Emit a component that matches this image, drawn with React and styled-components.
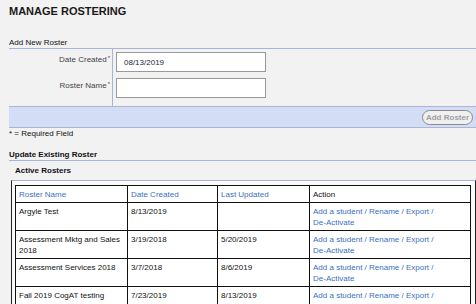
import React from "react";
import styled, { createGlobalStyle } from "styled-components";

const GlobalStyle = createGlobalStyle`
  body {
    margin: 0;
    background: #f2f2f2;
    font-family: "Liberation Sans", Arial, sans-serif;
    font-size: 8px;
    color: #111;
  }
`;

const Page = styled.div`
  padding: 5px 0 0 9px;
`;

const Title = styled.h1`
  margin: 0;
  font-size: 11px;
  line-height: 13px;
  font-weight: bold;
  color: #1a1a1a;
`;

const SectionHead = styled.div`
  margin-top: ${(p) => p.$top}px;
  line-height: 10px;
  font-weight: ${(p) => (p.$bold ? "bold" : "normal")};
  border-bottom: 1px solid #a9b5d3;
`;

const Form = styled.div`
  display: flex;
`;

const Labels = styled.div`
  width: 101px;
  border-right: 1px solid #a9b5d3;
  padding: 3px 2px 8px 0;
  display: flex;
  flex-direction: column;
  gap: 6px;
  align-items: flex-end;
`;

const Label = styled.div`
  box-sizing: border-box;
  height: 20px;
  padding-top: 1px;
  line-height: 10px;
  color: #444;
  sup {
    font-size: 6px;
    vertical-align: 2px;
    margin-left: 1px;
  }
`;

const Fields = styled.div`
  padding: 3px 0 8px 3px;
  display: flex;
  flex-direction: column;
  gap: 6px;
`;

const Input = styled.input`
  box-sizing: border-box;
  width: 150px;
  height: 20px;
  border: 1px solid #999;
  background: #fff;
  padding: 0 7px;
  font-family: inherit;
  font-size: 8px;
  color: #1c1c3c;
  outline: none;
`;

const Bar = styled.div`
  height: 20px;
  background: #d3ddf5;
  border-top: 1px solid #a9b5d3;
  border-bottom: 1px solid #a9b5d3;
  display: flex;
  align-items: center;
  justify-content: flex-end;
  padding-right: 3px;
`;

const Button = styled.button`
  height: 15px;
  width: 51px;
  padding: 0;
  border: 1px solid #8a8a8a;
  border-radius: 8px;
  background: #f0f0f0;
  color: #a0a0a0;
  font-family: inherit;
  font-size: 8px;
  font-weight: bold;
`;

const Note = styled.div`
  margin-top: 1px;
  line-height: 10px;
`;

const SubHead = styled.div`
  padding: 5px 0 4px 6px;
  line-height: 10px;
  font-weight: bold;
`;

const Frame = styled.div`
  margin-left: 2px;
  border-top: 1px solid #a9b5d3;
  border-left: 1px solid #222;
  border-right: 1px solid #222;
  background: #fafafa;
  padding: 4px 4px 0 3px;
`;

const Table = styled.table`
  width: 100%;
  table-layout: fixed;
  border-collapse: collapse;
  background: #fff;
  border: 1px solid #111;
`;

const Th = styled.th`
  text-align: left;
  font-weight: normal;
  height: 16px;
  padding: 0 3px;
  border: 1px solid #111;
  line-height: 11px;
  color: ${(p) => (p.$link ? "#3a6fc4" : "#111")};
`;

const Td = styled.td`
  vertical-align: top;
  padding: 3px 3px 2px;
  border: 1px solid #111;
  line-height: 11px;
  color: #111;
`;

const Action = styled.span`
  color: #3a6fc4;
`;

const rows = [
  ["Argyle Test", "8/13/2019", ""],
  ["Assessment Mktg and Sales 2018", "3/19/2018", "5/20/2019"],
  ["Assessment Services 2018", "3/7/2018", "8/6/2019"],
  ["Fall 2019 CogAT testing", "7/23/2019", "8/13/2019"],
];

export default function App() {
  return (
    <>
      <GlobalStyle />
      <Page>
        <Title>MANAGE ROSTERING</Title>
        <SectionHead $top={20}>Add New Roster</SectionHead>
        <Form>
          <Labels>
            <Label>
              Date Created<sup>*</sup>
            </Label>
            <Label>
              Roster Name<sup>*</sup>
            </Label>
          </Labels>
          <Fields>
            <Input defaultValue="08/13/2019" />
            <Input />
          </Fields>
        </Form>
        <Bar>
          <Button disabled>Add Roster</Button>
        </Bar>
        <Note>* = Required Field</Note>
        <SectionHead $top={11} $bold>
          Update Existing Roster
        </SectionHead>
        <SubHead>Active Rosters</SubHead>
        <Frame>
          <Table>
            <colgroup>
              <col style={{ width: 112 }} />
              <col style={{ width: 90 }} />
              <col style={{ width: 92 }} />
              <col />
            </colgroup>
            <thead>
              <tr>
                <Th $link>Roster Name</Th>
                <Th $link>Date Created</Th>
                <Th $link>Last Updated</Th>
                <Th>Action</Th>
              </tr>
            </thead>
            <tbody>
              {rows.map(([name, created, updated]) => (
                <tr key={name}>
                  <Td>{name}</Td>
                  <Td>{created}</Td>
                  <Td>{updated}</Td>
                  <Td>
                    <Action>
                      Add a student / Rename / Export /
                      <br />
                      De-Activate
                    </Action>
                  </Td>
                </tr>
              ))}
            </tbody>
          </Table>
        </Frame>
      </Page>
    </>
  );
}
